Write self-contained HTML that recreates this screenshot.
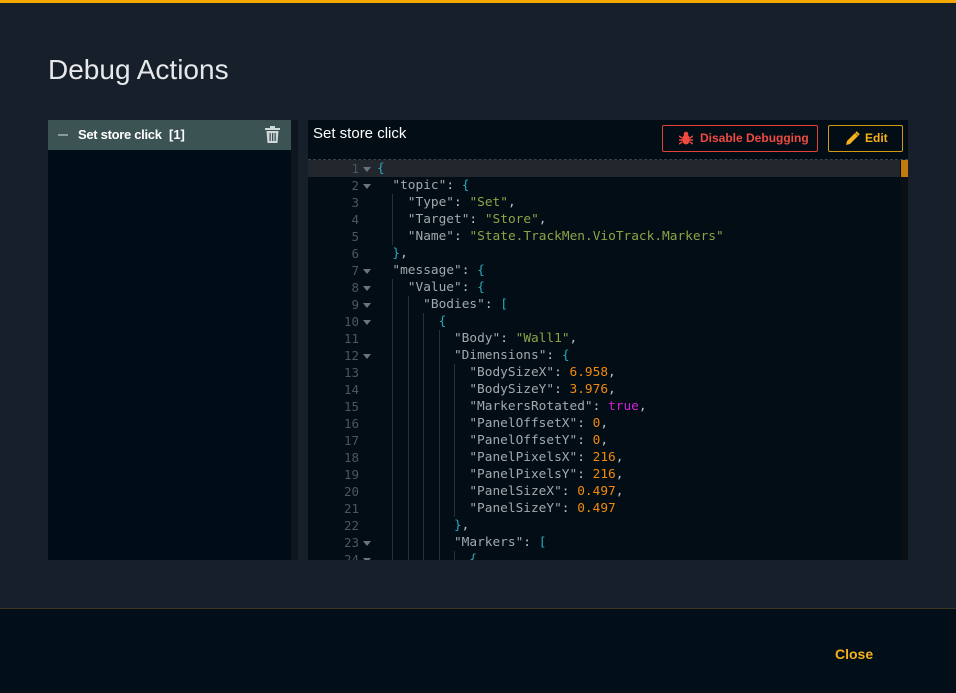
<!DOCTYPE html>
<html><head><style>
*{margin:0;padding:0;box-sizing:border-box}
body{width:956px;height:693px;background:#17202a;font-family:"Liberation Sans",sans-serif;position:relative;overflow:hidden}
.top{position:absolute;left:0;top:0;width:956px;height:3px;background:#f5a800}
h1{position:absolute;left:48px;top:54px;font-weight:normal;font-size:28px;color:#e6e8ea}
.left{position:absolute;left:48px;top:120px;width:243px;height:440px;background:#010d16}
.lh{height:30px;background:#3b5353;color:#fff;font-weight:bold;font-size:13px;line-height:30px;position:relative}
.lh .dash{position:absolute;left:10px;top:14px;width:10px;height:2px;background:#8a9a9a}
.lh .t{position:absolute;left:30px;letter-spacing:-0.3px}
.lh .n{position:absolute;left:121px;font-weight:bold}
.div{position:absolute;left:291px;top:120px;width:7px;height:440px;background:#0f171e}
.right{position:absolute;left:308px;top:120px;width:600px;height:440px;background:#020d16;overflow:hidden}
.rt{position:absolute;left:5px;top:5px;color:#fff;font-size:15px}
.btn{position:absolute;top:5px;height:27px;border:1px solid;border-radius:2px;font-size:12px;font-weight:bold;line-height:25px}
.b1{left:354px;width:156px;border-color:#e0413a;color:#f04a40}
.b2{left:520px;width:75px;border-color:#d29a10;color:#f5b01a}
.ed{position:absolute;left:0;top:39px;width:600px;height:401px;border-top:1px dashed #3a4048;font-family:"DejaVu Sans Mono",monospace;font-size:12.8px}
.hl{position:absolute;left:0;top:0;width:592px;height:17px;background:#22272d}
.sb{position:absolute;left:593px;top:0;width:7px;height:17px;background:#c57a0c}
.sbt{position:absolute;left:593px;top:17px;width:7px;height:384px;background:#0a1015}
.ln{height:17px;line-height:17px;position:relative;white-space:pre}
.num{position:absolute;right:18px;color:#4b5661;font-size:12.5px}
.fold{position:absolute;left:55px;top:7px;border-left:4px solid transparent;border-right:4px solid transparent;border-top:5px solid #6a7480}
.code{position:absolute;left:69px;top:0}
.g{display:inline-block;width:15.4px;height:17px;vertical-align:top}
.gl{border-left:1px solid #2a3038}
.k{color:#a2a9af}.s{color:#8fa344}.nm{color:#f08a0c}.tr{color:#d41fd8}.p{color:#b8c0c6}.b{color:#2ba7b8}
.foot{position:absolute;left:0;top:608px;width:956px;height:85px;background:#020f19;border-top:1px solid #3e3620}
.close{position:absolute;left:835px;top:37px;color:#f5b01a;font-weight:bold;font-size:14px}
</style></head><body>
<div class="top"></div>
<h1>Debug Actions</h1>
<div class="left"><div class="lh"><span class="dash"></span><span class="t">Set store click</span><span class="n">[1]</span>
<svg style="position:absolute;left:217px;top:6px" width="15" height="17" viewBox="0 0 15 17"><rect x="0" y="2" width="15" height="2" fill="#d0d8d8"/><rect x="5" y="0" width="5" height="2" fill="#d0d8d8"/><path d="M1.5 5h12l-1 12h-10z" fill="#d0d8d8"/><rect x="4.5" y="7" width="1.3" height="8" fill="#3b5353"/><rect x="7" y="7" width="1.3" height="8" fill="#3b5353"/><rect x="9.5" y="7" width="1.3" height="8" fill="#3b5353"/></svg>
</div></div>
<div class="div"></div>
<div class="right">
<div class="rt">Set store click</div>
<div class="btn b1"><svg style="position:absolute;left:16px;top:5px" width="14" height="15" viewBox="0 0 14 15"><ellipse cx="7" cy="8.5" rx="4" ry="5" fill="#f04a40"/><circle cx="7" cy="3" r="2.3" fill="#f04a40"/><path d="M0 5l3 2M14 5l-3 2M0 9h3M14 9h-3M0 13l3-2M14 13l-3-2" stroke="#f04a40" stroke-width="1.4"/></svg><span style="position:absolute;left:37px">Disable Debugging</span></div>
<div class="btn b2"><svg style="position:absolute;left:16px;top:5px" width="15" height="15" viewBox="0 0 15 15"><path d="M1 14l1-4 8-8 3 3-8 8z" fill="#f5b01a"/><path d="M11 1l3 3" stroke="#f5b01a" stroke-width="2"/></svg><span style="position:absolute;left:36px">Edit</span></div>
<div class="ed">
<div class="hl"></div><div class="sb"></div><div class="sbt"></div>
<div id="lines"></div>
</div>
</div>
<div class="foot"><span class="close">Close</span></div>
<script>
var L=[
[0,1,'<span class="b">{</span>'],
[1,1,'<span class="k">"topic"</span><span class="p">: </span><span class="b">{</span>'],
[2,0,'<span class="k">"Type"</span><span class="p">: </span><span class="s">"Set"</span><span class="p">,</span>'],
[2,0,'<span class="k">"Target"</span><span class="p">: </span><span class="s">"Store"</span><span class="p">,</span>'],
[2,0,'<span class="k">"Name"</span><span class="p">: </span><span class="s">"State.TrackMen.VioTrack.Markers"</span>'],
[1,0,'<span class="b">}</span><span class="p">,</span>'],
[1,1,'<span class="k">"message"</span><span class="p">: </span><span class="b">{</span>'],
[2,1,'<span class="k">"Value"</span><span class="p">: </span><span class="b">{</span>'],
[3,1,'<span class="k">"Bodies"</span><span class="p">: </span><span class="b">[</span>'],
[4,1,'<span class="b">{</span>'],
[5,0,'<span class="k">"Body"</span><span class="p">: </span><span class="s">"Wall1"</span><span class="p">,</span>'],
[5,1,'<span class="k">"Dimensions"</span><span class="p">: </span><span class="b">{</span>']];
var d=[["BodySizeX","6.958"],["BodySizeY","3.976"],["MarkersRotated","true"],["PanelOffsetX","0"],["PanelOffsetY","0"],["PanelPixelsX","216"],["PanelPixelsY","216"],["PanelSizeX","0.497"],["PanelSizeY","0.497"]];
d.forEach(function(x,i){L.push([6,0,'<span class="k">"'+x[0]+'"</span><span class="p">: </span><span class="'+(x[1]=="true"?"tr":"nm")+'">'+x[1]+'</span>'+(i<8?'<span class="p">,</span>':'')]);});
L.push([5,0,'<span class="b">}</span><span class="p">,</span>']);
L.push([5,1,'<span class="k">"Markers"</span><span class="p">: </span><span class="b">[</span>']);
L.push([6,1,'<span class="b">{</span>']);
var h='';
L.forEach(function(l,i){var g='';for(var j=0;j<l[0];j++)g+='<span class="g'+(j>0?' gl':'')+'"></span>';
h+='<div class="ln"><span style="position:absolute;left:0;width:69px;height:17px"><span class="num">'+(i+1)+'</span>'+(l[1]?'<span class="fold"></span>':'')+'</span><span class="code">'+g+l[2]+'</span></div>';});
document.getElementById('lines').innerHTML=h;
</script>
</body></html>
